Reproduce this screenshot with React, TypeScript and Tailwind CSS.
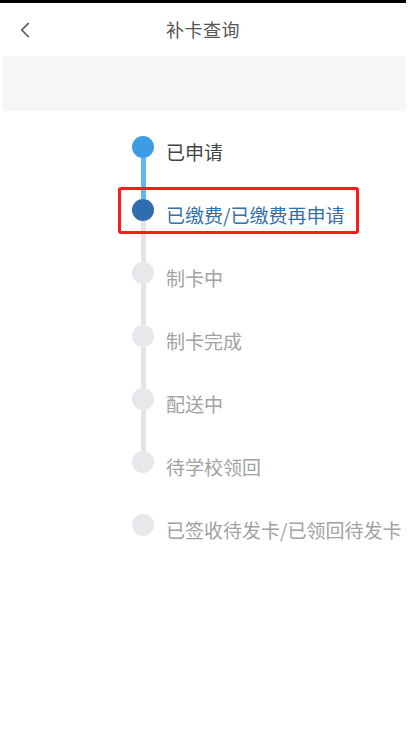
import { ChevronLeft } from 'lucide-react';

type Status = 'done' | 'current' | 'pending';

interface Step {
  label: string;
  status: Status;
}

const steps: Step[] = [
  { label: '已申请', status: 'done' },
  { label: '已缴费/已缴费再申请', status: 'current' },
  { label: '制卡中', status: 'pending' },
  { label: '制卡完成', status: 'pending' },
  { label: '配送中', status: 'pending' },
  { label: '待学校领回', status: 'pending' },
  { label: '已签收待发卡/已领回待发卡', status: 'pending' },
];

const dotStyles: Record<Status, string> = {
  done: 'bg-[#3d9ce3]',
  current: 'bg-[#2f6daf]',
  pending: 'bg-[#e6e8ec]',
};

const textStyles: Record<Status, string> = {
  done: 'text-[#444444]',
  current: 'text-[#3571a9]',
  pending: 'text-[#a2a2a2]',
};

export default function App() {
  return (
    <div
      className="relative w-[412px] h-[749px] bg-white overflow-hidden"
      style={{ fontFamily: '"Noto Sans CJK SC", "Noto Sans", sans-serif' }}
    >
      {/* Status bar edge */}
      <div className="h-[3px] w-[406px] bg-black" />

      {/* Header */}
      <div className="relative h-[53px] w-[406px] flex items-center justify-center">
        <button className="absolute left-[12px] top-[14px] text-[#555555]">
          <ChevronLeft size={26} strokeWidth={1.6} />
        </button>
        <h1 className="text-[18px] text-[#555555] tracking-[0.5px]">补卡查询</h1>
      </div>

      {/* Gray band */}
      <div className="ml-[3px] h-[55px] w-[403px] bg-[#f6f6f6]" />

      {/* Timeline */}
      <div className="pt-[25px] pl-[132px]">
        {steps.map((step, i) => {
          // the line stops at 待学校领回; the last step has no connector above it
          const hasLine = i < steps.length - 2;
          const lineColor = step.status === 'done' ? 'bg-[#62b6f7]' : 'bg-[#e4e4e4]';
          return (
            <div key={step.label} className="flex h-[63px]">
              <div className="flex flex-col items-center w-[22px]">
                <div className={`w-[22px] h-[22px] rounded-full shrink-0 ${dotStyles[step.status]}`} />
                {hasLine && <div className={`w-[5px] flex-1 ${lineColor}`} />}
              </div>
              <div
                className={`ml-[12px] mt-[5px] h-[22px] flex items-center text-[19px] whitespace-nowrap ${textStyles[step.status]}`}
              >
                {step.label}
              </div>
            </div>
          );
        })}
      </div>

      {/* Red highlight box */}
      <div className="absolute left-[118px] top-[187px] w-[241px] h-[47px] border-[3px] border-[#ff1a1a] rounded-[3px]" />
    </div>
  );
}
